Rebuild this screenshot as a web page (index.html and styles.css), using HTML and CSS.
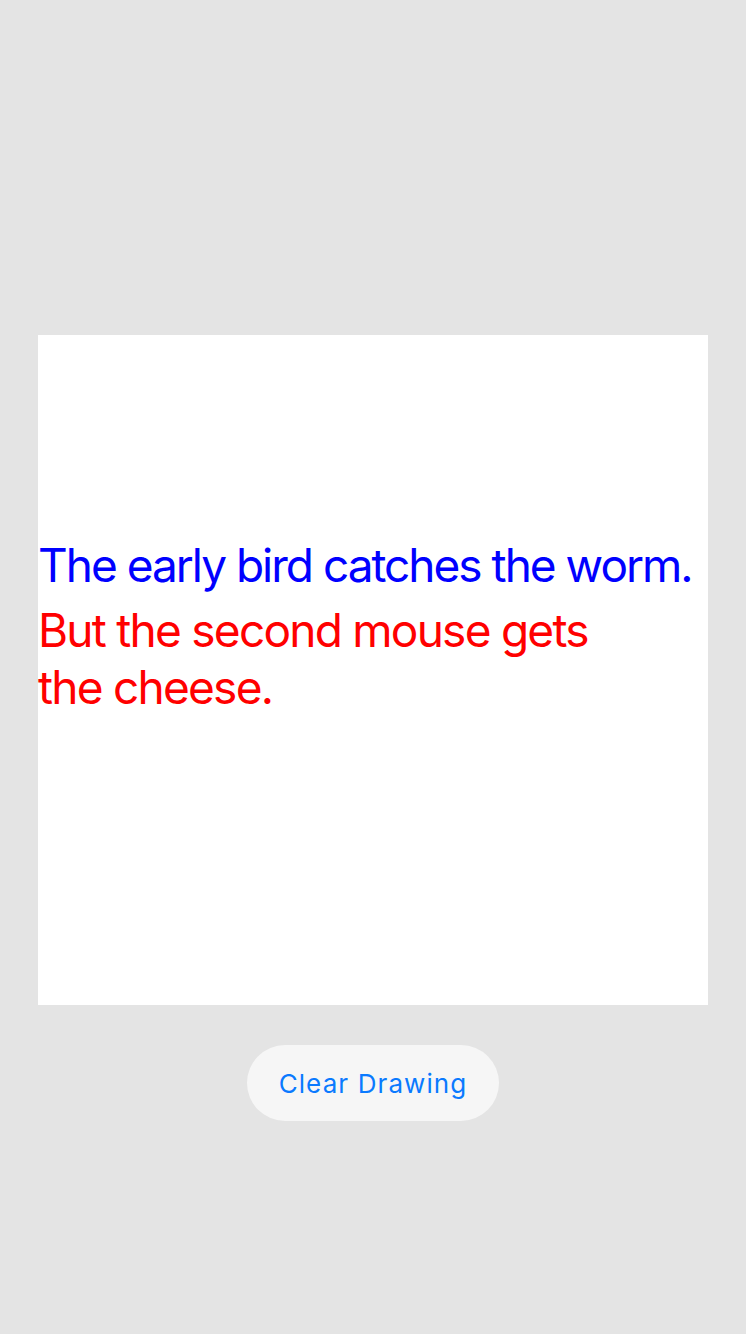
FILE: index.html
```html
<!DOCTYPE html>
<html>
<head>
<meta charset="utf-8">
<link rel="stylesheet" href="styles.css">
</head>
<body>
<main class="screen">
  <section class="canvas">
    <p class="line blue">The early bird catches the worm.</p>
    <p class="line red">But the second mouse gets<br>the cheese.</p>
  </section>
  <button class="clear-btn">Clear Drawing</button>
</main>
</body>
</html>
```
FILE: styles.css
```css
html, body {
  margin: 0;
  padding: 0;
  background: #e4e4e4;
}
.screen {
  width: 746px;
  height: 1334px;
  display: flex;
  flex-direction: column;
  align-items: center;
  padding-top: 335px;
  box-sizing: border-box;
  font-family: Inter, "Noto Sans", sans-serif;
}
.canvas {
  width: 670px;
  height: 670px;
  background: #ffffff;
  padding-top: 202px;
  box-sizing: border-box;
}
.line {
  margin: 0;
  font-size: 46px;
  line-height: 57px;
  white-space: nowrap;
}
.blue {
  color: #0000ff;
  letter-spacing: -2px;
}
.red {
  color: #ff0000;
  letter-spacing: -1.75px;
  margin-top: 8px;
}
.clear-btn {
  margin-top: 40px;
  width: 252px;
  height: 76px;
  border: none;
  border-radius: 38px;
  background: #f6f6f6;
  color: #0a7aff;
  font-family: Inter, "Noto Sans", sans-serif;
  font-size: 26px;
  letter-spacing: 1.1px;
  padding: 0;
}
```
